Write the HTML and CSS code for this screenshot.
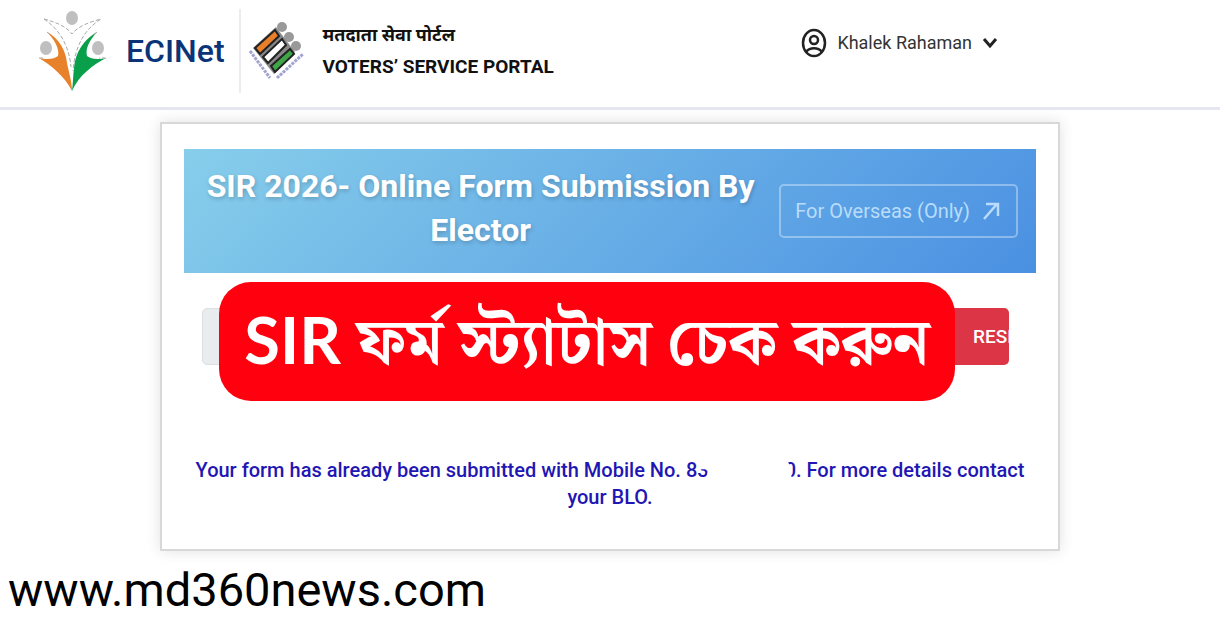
FILE: index.html
```html
<!DOCTYPE html>
<html lang="en">

<head>
    <meta charset="UTF-8">
    <meta name="viewport" content="width=device-width, initial-scale=1.0">
    <title>Voters' Service Portal</title>
    <link rel="stylesheet" href="styles.css">
</head>

<body>

    <header class="header">
        <div class="brand">
            <svg class="eci-logo" viewBox="0 0 72 84" aria-hidden="true">
                <g fill="#bfbfbf">
                    <ellipse cx="35" cy="9" rx="6" ry="7" />
                    <ellipse cx="9" cy="39" rx="6" ry="7" />
                    <ellipse cx="61" cy="39" rx="6" ry="7" />
                </g>
                <path d="M10 23C22 29 29 42 30 54C32 64 35 73 35 82C29 69 14 56 2 49C11 51 17 50 21 47C23 40 17 30 10 23Z" fill="#e8822a" />
                <path d="M60 23C47 30 38 44 37 59C36 67 36 74 35 82C42 66 56 56 69 49C60 51 54 50 50 47C48 39 53 31 60 23Z" fill="#0aa04b" />
                <path d="M7 10C18 13 29 17 35 25C41 17 53 13 64 10C48 20 38 36 36 62M7 10C22 20 32 36 34 58M2 49L8 49M69 49L62 49M10 23L15 27M60 23L55 27" fill="none" stroke="#aaa" stroke-width="1" stroke-dasharray="4 2" />
            </svg>
            <span class="brand-name">ECINet</span>
        </div>
        <div class="portal">
            <svg class="portal-logo" viewBox="0 0 56 60" aria-hidden="true">
                <g fill="#999">
                    <circle cx="33" cy="6" r="5" />
                    <circle cx="40" cy="16" r="5" />
                    <circle cx="47" cy="25" r="5" />
                </g>
                <path d="M4 27L27 6L46 31L25 53Z" fill="#888" />
                <g stroke="#222" stroke-width="2">
                    <path d="M6 27L26 9L30 15L11 33Z" fill="#e8802b" />
                    <path d="M14 36L33 18L37 24L19 42Z" fill="#fff" />
                    <path d="M22 45L41 28L45 33L26 51Z" fill="#3fa648" />
                </g>
                <g fill="none" stroke="#a3a3d0" stroke-width="3" stroke-dasharray="3 1">
                    <path d="M1 30L21 57" />
                    <path d="M28 57L54 33" />
                </g>
            </svg>
            <div class="portal-title">
                <span class="portal-hindi" lang="hi">मतदाता सेवा पोर्टल</span>
                <span class="portal-english">VOTERS’ SERVICE PORTAL</span>
            </div>
        </div>
        <button class="user-menu" type="button">
            <svg class="user-icon" viewBox="0 0 26 30" aria-hidden="true">
                <g fill="none" stroke="#222" stroke-width="2.5">
                    <ellipse cx="13" cy="15" rx="11" ry="13" />
                    <circle cx="13" cy="12" r="4" />
                    <path d="M5 24C9 19 17 19 21 24" />
                </g>
            </svg>
            <span>Khalek Rahaman</span>
            <svg class="chevron" viewBox="0 0 16 12" aria-hidden="true">
                <path d="M2 2L8 9L14 2" fill="none" stroke="#222" stroke-width="3" />
            </svg>
        </button>
    </header>

    <main class="card">
        <div class="banner">
            <h1 class="banner-title">SIR 2026- Online Form Submission By Elector</h1>
            <button class="overseas-btn" type="button">
                <span>For Overseas (Only)</span>
                <svg class="arrow" viewBox="0 0 18 20" aria-hidden="true">
                    <path d="M2 18L15 3M4 3H16V15" fill="none" stroke="currentColor" stroke-width="2.5" />
                </svg>
            </button>
        </div>

        <div class="search-row">
            <input class="search-input" type="text" aria-label="EPIC number" disabled>
            <button class="reset-btn" type="button">RESET</button>
            <div class="callout" lang="bn">SIR ফর্ম স্ট্যাটাস চেক করুন</div>
        </div>

        <p class="message">Your form has already been submitted with Mobile No. 8<span class="cut-start">3</span><span class="hidden-digits"></span><span class="cut-end">0</span>. For more details contact your BLO.</p>
    </main>

    <footer class="site-name">www.md360news.com</footer>

</body>

</html>
```
FILE: styles.css
```css
* {
    box-sizing: border-box;
}

body {
    margin: 0;
    font-family: Roboto, "Noto Sans", sans-serif;
    background: #fff;
    color: #111;
}

button {
    font-family: inherit;
    cursor: pointer;
}

.header {
    display: flex;
    align-items: center;
    height: 110px;
    padding: 0 222px 6px 37px;
    border-bottom: 3px solid #e6e6f0;
}

.brand {
    display: flex;
    align-items: center;
    gap: 17px;
    height: 84px;
    padding-right: 14px;
    border-right: 2px solid #ececf0;
}

.eci-logo {
    width: 72px;
    height: 84px;
}

.brand-name {
    font-size: 32px;
    font-weight: 500;
    color: #0b3478;
}

.portal {
    display: flex;
    align-items: center;
    gap: 18px;
    padding-left: 8px;
}

.portal-logo {
    width: 56px;
    height: 60px;
}

.portal-title {
    display: flex;
    flex-direction: column;
    font-size: 19px;
    font-weight: 700;
    line-height: 32px;
    white-space: nowrap;
}

.portal-hindi {
    font-size: 18px;
}

.user-menu {
    display: flex;
    align-items: center;
    gap: 10px;
    margin-left: auto;
    margin-bottom: 16px;
    padding: 0;
    border: none;
    background: none;
    color: #333;
    font-size: 18px;
    white-space: nowrap;
}

.user-icon {
    width: 26px;
    height: 30px;
}

.chevron {
    width: 16px;
    height: 12px;
}

.card {
    max-width: 900px;
    margin: 12px auto 0;
    padding: 25px 22px 38px;
    border: 2px solid #d8d8d8;
    background: #fff;
    box-shadow: 0 0 14px rgba(0, 0, 0, 0.12);
}

.banner {
    display: flex;
    align-items: center;
    gap: 20px;
    min-height: 124px;
    padding: 0 18px;
    background: linear-gradient(135deg, #87ceeb, #4a90e2);
}

.banner-title {
    flex: 1;
    margin: 0 0 6px;
    font-size: 32px;
    font-weight: 700;
    line-height: 44px;
    text-align: center;
    color: #fff;
    text-shadow: 1px 2px 4px rgba(0, 0, 0, 0.2);
}

.overseas-btn {
    display: flex;
    align-items: center;
    gap: 12px;
    height: 54px;
    padding: 0 16px 0 14px;
    border: 2px solid rgba(255, 255, 255, 0.35);
    border-radius: 5px;
    background: none;
    color: #b9dcfa;
    font-size: 20px;
    white-space: nowrap;
}

.arrow {
    width: 18px;
    height: 20px;
}

.search-row {
    position: relative;
    display: flex;
    margin: 35px 27px 0 18px;
}

.search-input {
    flex: 1;
    min-width: 0;
    height: 57px;
    border: 1px solid #dcdfe2;
    border-radius: 5px;
    background: #e9ecef;
}

.reset-btn {
    width: 72px;
    height: 57px;
    padding: 0 0 0 36px;
    border: none;
    border-radius: 5px;
    background: #dc3545;
    color: #fff;
    font-size: 19px;
    font-weight: 500;
    text-align: left;
    overflow: hidden;
}

/* sits over the search row */
.callout {
    position: absolute;
    top: -26px;
    left: 17px;
    right: 54px;
    height: 119px;
    border-radius: 32px;
    background: #ff000f;
    color: #fff;
    font-family: Lato, "Noto Serif Bengali", "Noto Sans Bengali", sans-serif;
    font-size: 65px;
    font-weight: 700;
    line-height: 114px;
    text-align: center;
    white-space: nowrap;
}

.message {
    margin: 92px 0 0;
    font-size: 20px;
    font-weight: 500;
    line-height: 27px;
    text-align: center;
    color: #1f16b4;
}

/* the mobile number is mostly blanked out */
.cut-start,
.cut-end,
.hidden-digits {
    display: inline-block;
}

.cut-start {
    clip-path: polygon(0 45%, 100% 45%, 60% 100%, 0 60%);
}

.cut-end {
    clip-path: polygon(0 0, 100% 0, 100% 100%, 60% 100%, 60% 40%);
}

.hidden-digits {
    width: 76px;
}

.site-name {
    padding: 11px 8px 0;
    font-size: 47px;
    line-height: 56px;
    color: #000;
}
```
